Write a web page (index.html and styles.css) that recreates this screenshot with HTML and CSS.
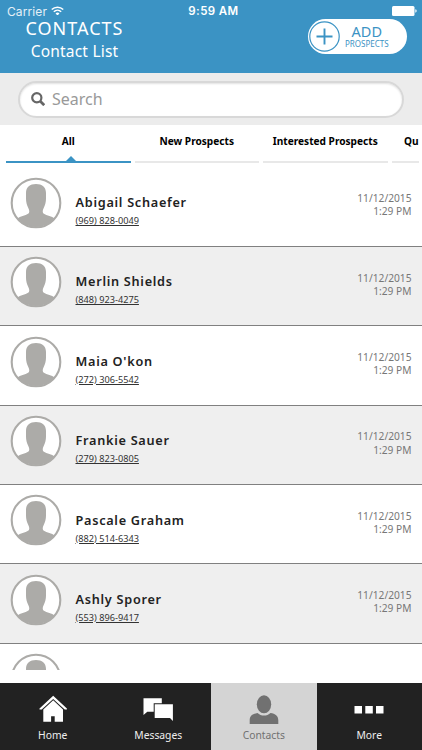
FILE: index.html
```html
<!DOCTYPE html>
<html lang="en">
  <head>
    <meta charset="UTF-8" />
    <meta name="viewport" content="width=device-width, initial-scale=1.0" />
    <title>Contacts</title>
    <link rel="stylesheet" href="styles.css">
  </head>
  <body>
    <svg class="defs" width="0" height="0">
      <symbol id="avatar" viewBox="0 0 52 52">
        <circle cx="26" cy="26" r="24.5" fill="#fff" />
        <path d="M7.500 41.500C10 39 15 39 18.500 36.500C19.800 35 19.300 33 18.300 31C16.800 28 16 25 16 21.500V16C16 10 20 7 26 7S36 10 36 16V21.500C36 25 35.200 28 33.700 31C32.700 33 32.200 35 33.500 36.500C37 39 42 39 44.500 41.500A24.500 24.500 0 0 1 7.500 41.500Z" fill="#acaba8" />
        <circle cx="26" cy="26" r="24.300" fill="none" stroke="#acaba8" stroke-width="2.100" />
      </symbol>
    </svg>

    <header class="header">
      <div class="status-bar">
        <div class="carrier">
          Carrier
          <svg class="wifi" viewBox="0 0 12 9" width="13" height="9.750">
            <path d="M.7 3.300a7.600 7.600 0 0 1 10.600 0M2.600 5.300a4.900 4.900 0 0 1 6.800 0" fill="none" stroke="#fff" stroke-width="1.400" />
            <path d="M4.200 6.900a2.600 2.600 0 0 1 3.600 0L6 8.800z" fill="#fff" />
          </svg>
        </div>
        <div class="clock">9:59 AM</div>
        <svg class="battery" viewBox="0 0 25 10" width="25" height="10">
          <rect width="22.500" height="10" rx="1.500" fill="#fff" />
          <path d="M23.300 3.300q1.400.3 1.400 1.700t-1.400 1.700z" fill="#fff" />
        </svg>
      </div>
      <div class="title-bar">
        <div class="titles">
          <h1>CONTACTS</h1>
          <h2>Contact List</h2>
        </div>
        <button type="button" class="add-button">
          <svg viewBox="0 0 31 31" width="31" height="31">
            <circle cx="15.500" cy="15.500" r="14.700" fill="none" stroke="#3b93c4" stroke-width="1.200" />
            <path d="M15.500 7.500v16M7.500 15.500h16" stroke="#3b93c4" stroke-width="1.900" />
          </svg>
          <span class="add-label">
            <span class="add-main">ADD</span>
            <span class="add-sub">PROSPECTS</span>
          </span>
        </button>
      </div>
    </header>

    <div class="search-bar">
      <label class="search-box">
        <svg viewBox="0 0 14 14" width="14" height="14">
          <circle cx="5.800" cy="5.800" r="4.600" fill="none" stroke="#666" stroke-width="2.200" />
          <path d="M9 9l4.200 4.200" stroke="#666" stroke-width="2.700" />
        </svg>
        <input type="text" placeholder="Search" />
      </label>
    </div>

    <nav class="tabs">
      <a class="tab active">All</a>
      <a class="tab">New Prospects</a>
      <a class="tab">Interested Prospects</a>
      <a class="tab tab-cut">Qu</a>
    </nav>

    <main class="contact-list">
      <div class="contact">
        <svg class="avatar"><use href="#avatar" /></svg>
        <div class="info">
          <div class="name">Abigail Schaefer</div>
          <a class="phone">(969) 828-0049</a>
        </div>
        <div class="date">11/12/2015<br />1:29 PM</div>
      </div>
      <div class="contact">
        <svg class="avatar"><use href="#avatar" /></svg>
        <div class="info">
          <div class="name">Merlin Shields</div>
          <a class="phone">(848) 923-4275</a>
        </div>
        <div class="date">11/12/2015<br />1:29 PM</div>
      </div>
      <div class="contact">
        <svg class="avatar"><use href="#avatar" /></svg>
        <div class="info">
          <div class="name">Maia O'kon</div>
          <a class="phone">(272) 306-5542</a>
        </div>
        <div class="date">11/12/2015<br />1:29 PM</div>
      </div>
      <div class="contact">
        <svg class="avatar"><use href="#avatar" /></svg>
        <div class="info">
          <div class="name">Frankie Sauer</div>
          <a class="phone">(279) 823-0805</a>
        </div>
        <div class="date">11/12/2015<br />1:29 PM</div>
      </div>
      <div class="contact">
        <svg class="avatar"><use href="#avatar" /></svg>
        <div class="info">
          <div class="name">Pascale Graham</div>
          <a class="phone">(882) 514-6343</a>
        </div>
        <div class="date">11/12/2015<br />1:29 PM</div>
      </div>
      <div class="contact">
        <svg class="avatar"><use href="#avatar" /></svg>
        <div class="info">
          <div class="name">Ashly Sporer</div>
          <a class="phone">(553) 896-9417</a>
        </div>
        <div class="date">11/12/2015<br />1:29 PM</div>
      </div>
      <div class="contact">
        <svg class="avatar"><use href="#avatar" /></svg>
      </div>
    </main>

    <footer class="bottom-nav">
      <a class="nav-item">
        <svg viewBox="0 0 30 30" width="30" height="30">
          <path d="M15.200 1.800L1.500 14.400v1h2.200L15.200 4.900l11.500 10.500h2.200v-1z" fill="#fff" />
          <path d="M15.200 6.300L5.300 15.400V27.700h7.800v-5.500h3.600v5.500h8.300V15.400z" fill="#fff" />
        </svg>
        Home
      </a>
      <a class="nav-item">
        <svg viewBox="0 0 30 30" width="30" height="30">
          <path d="M.5 4.300h18.300v5H10.700v8.400H4.300L.5 21z" fill="#fff" />
          <path d="M11.700 10.300h18.200v16.700L27 23.900H11.700z" fill="#fff" />
        </svg>
        Messages
      </a>
      <a class="nav-item selected">
        <svg viewBox="0 0 30 30" width="30" height="30">
          <ellipse cx="15" cy="10.300" rx="7.200" ry="9" fill="#717171" />
          <path d="M.7 30v-3.700c0-4.500 3-6.500 7.800-7.300 3.500 3.400 9.500 3.400 13 0 4.800.8 7.800 2.800 7.800 7.300v3.700z" fill="#717171" />
        </svg>
        Contacts
      </a>
      <a class="nav-item">
        <svg viewBox="0 0 30 30" width="30" height="30">
          <path d="M.5 12h7.500v7.500H.5zM11.300 12h7.500v7.500h-7.500zM22 12h7.500v7.500H22z" fill="#fff" />
        </svg>
        More
      </a>
    </footer>
  </body>
</html>
```

FILE: styles.css
```css
* {
  box-sizing: border-box;
}

body {
  font-family: "Noto Sans", sans-serif;
  background-color: #fff;
  margin: 0;
  height: 750px;
  display: flex;
  flex-direction: column;
  overflow: hidden;
}

.defs {
  display: none;
}

.header {
  height: 72.500px;
  background-color: #3b93c4;
  color: #fff;
  flex-shrink: 0;
}

.status-bar {
  height: 21px;
  padding: 1px 6px 0 7px;
  display: flex;
  align-items: center;
  justify-content: space-between;
  font-family: Inter, sans-serif;
  font-size: 12px;
}

.carrier {
  width: 100px;
  display: flex;
  align-items: center;
  gap: 4px;
  color: #e5f0f7;
  letter-spacing: 0.1px;
}

.wifi {
  margin-top: -1px;
}

.clock {
  width: 60px;
  text-align: center;
  white-space: nowrap;
  font-weight: 600;
  font-size: 11.500px;
  letter-spacing: 0.4px;
}

.battery {
  margin-left: 72px;
  margin-right: -1px;
}

.title-bar {
  display: flex;
  justify-content: space-between;
  padding: 0 15px 0 25px;
}

.titles {
  width: 99px;
  margin-top: -4px;
  text-align: center;
  white-space: nowrap;
}

h1 {
  margin: 0;
  font-size: 18px;
  font-weight: normal;
  line-height: 23px;
  letter-spacing: 1px;
}

h2 {
  margin: 0;
  font-size: 15.500px;
  font-weight: normal;
  line-height: 22px;
  letter-spacing: 0.2px;
}

.add-button {
  width: 99px;
  height: 35px;
  margin-top: -2px;
  padding: 0 0 0 1px;
  display: flex;
  align-items: center;
  gap: 5px;
  background-color: #fff;
  color: #3b93c4;
  border: none;
  border-radius: 18px;
  font-family: inherit;
}

.add-label {
  display: flex;
  flex-direction: column;
  align-items: center;
}

.add-main {
  font-size: 14.500px;
  line-height: 14px;
}

.add-sub {
  font-size: 8px;
  line-height: 11px;
}

.search-bar {
  height: 52.500px;
  padding: 8px 18px 0;
  background-color: #ececec;
  flex-shrink: 0;
}

.search-box {
  height: 37px;
  padding-left: 11px;
  display: flex;
  align-items: center;
  gap: 7px;
  background-color: #fff;
  border: 2px solid #d8d8d8;
  border-radius: 19px;
  box-shadow: inset 0 1px 2px rgba(0, 0, 0, 0.12);
}

.search-box input {
  width: 300px;
  padding: 0;
  border: none;
  outline: none;
  background: none;
  font-family: inherit;
  font-size: 16px;
}

.search-box input::placeholder {
  color: #999;
}

.tabs {
  height: 42.500px;
  padding: 0 3px 0 6px;
  display: flex;
  gap: 4px;
  flex-shrink: 0;
  overflow: hidden;
}

.tab {
  position: relative;
  width: 124.500px;
  height: 38px;
  flex-shrink: 0;
  border-bottom: 2px solid #e8e8e8;
  color: #000;
  font-size: 10.150px;
  font-weight: bold;
  line-height: 33px;
  text-align: center;
}

.tab.active {
  border-color: #3b93c4;
}

.tab.active::after {
  content: "";
  position: absolute;
  left: 60px;
  bottom: 0;
  border: 5px solid transparent;
  border-top: none;
  border-bottom-color: #3b93c4;
}

.tab-cut {
  width: 27px;
  padding-left: 12.500px;
  text-align: left;
}

.contact-list {
  height: 502.500px;
  overflow: hidden;
  flex-shrink: 0;
}

.contact {
  height: 79.400px;
  padding: 10px 10.500px 0 10px;
  display: flex;
  border-bottom: 1px solid #808080;
}

.contact:nth-child(even) {
  background-color: #efefef;
}

.avatar {
  width: 52px;
  height: 52px;
  margin-top: -0.600px;
}

.info {
  flex: 1;
  margin-left: 13.500px;
  padding-top: 15.500px;
}

.name {
  color: #222;
  font-size: 12.700px;
  font-weight: 600;
  line-height: 18px;
  letter-spacing: 0.720px;
}

.phone {
  display: block;
  color: #333;
  font-size: 9.200px;
  line-height: 19px;
  text-decoration: underline;
}

.date {
  padding-top: 14.700px;
  color: #777;
  font-size: 10.200px;
  line-height: 13.300px;
  text-align: right;
}

.bottom-nav {
  height: 67px;
  margin-top: auto;
  display: flex;
  flex-shrink: 0;
  background-color: #222;
}

.nav-item {
  flex: 1;
  padding-top: 11px;
  display: flex;
  flex-direction: column;
  align-items: center;
  gap: 3px;
  color: #eee;
  font-size: 10.300px;
  line-height: 16px;
}

.nav-item.selected {
  background-color: #d4d4d4;
  color: #717171;
}
```
